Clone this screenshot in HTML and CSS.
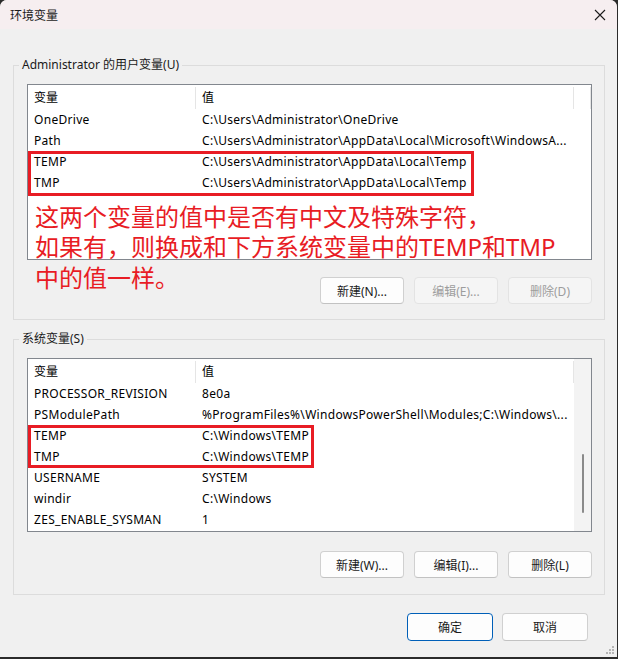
FILE: index.html
```html
<!DOCTYPE html>
<html lang="zh-CN">
<head>
    <meta charset="UTF-8">
    <title>环境变量</title>
    <link rel="stylesheet" href="styles.css">
</head>
<body>
    <div class="window">
        <div class="titlebar">
            <span class="title">环境变量</span>
            <svg class="close" width="12" height="12" viewBox="0 0 12 12">
                <path d="M1 1 L11 11 M11 1 L1 11" stroke="#1b1b1b" stroke-width="1.1" fill="none"/>
            </svg>
        </div>

        <div class="content">
            <fieldset class="group">
                <legend>Administrator 的用户变量(U)</legend>
                <div class="list list-user">
                    <div class="list-main">
                        <div class="row head"><span>变量</span><span>值</span><span></span></div>
                        <div class="row"><span>OneDrive</span><span>C:\Users\Administrator\OneDrive</span></div>
                        <div class="row"><span>Path</span><span>C:\Users\Administrator\AppData\Local\Microsoft\WindowsA...</span></div>
                        <div class="row"><span>TEMP</span><span>C:\Users\Administrator\AppData\Local\Temp</span></div>
                        <div class="row"><span>TMP</span><span>C:\Users\Administrator\AppData\Local\Temp</span></div>
                    </div>
                    <div class="mark mark-user"></div>
                    <p class="note">这两个变量的值中是否有中文及特殊字符，<br>如果有，则换成和下方系统变量中的<span class="latin">TEMP</span>和<span class="latin">TMP</span><br>中的值一样。</p>
                </div>
                <div class="buttons">
                    <button class="btn">新建(N)...</button>
                    <button class="btn" disabled>编辑(E)...</button>
                    <button class="btn" disabled>删除(D)</button>
                </div>
            </fieldset>

            <fieldset class="group group-sys">
                <legend>系统变量(S)</legend>
                <div class="list list-sys">
                    <div class="list-main">
                        <div class="row head"><span>变量</span><span>值</span><span></span></div>
                        <div class="row"><span>PROCESSOR_REVISION</span><span>8e0a</span></div>
                        <div class="row"><span>PSModulePath</span><span>%ProgramFiles%\WindowsPowerShell\Modules;C:\Windows\...</span></div>
                        <div class="row"><span>TEMP</span><span>C:\Windows\TEMP</span></div>
                        <div class="row"><span>TMP</span><span>C:\Windows\TEMP</span></div>
                        <div class="row"><span>USERNAME</span><span>SYSTEM</span></div>
                        <div class="row"><span>windir</span><span>C:\Windows</span></div>
                        <div class="row"><span>ZES_ENABLE_SYSMAN</span><span>1</span></div>
                    </div>
                    <div class="vscroll"><div class="thumb"></div></div>
                    <div class="mark mark-sys"></div>
                </div>
                <div class="buttons buttons-sys">
                    <button class="btn">新建(W)...</button>
                    <button class="btn">编辑(I)...</button>
                    <button class="btn">删除(L)</button>
                </div>
            </fieldset>

            <div class="footer">
                <button class="btn btn-main primary">确定</button>
                <button class="btn btn-main">取消</button>
            </div>
        </div>

        <svg class="grip" width="10" height="10" viewBox="0 0 10 10">
            <rect x="7" y="1" width="2" height="2" fill="#b5b5b5"/>
            <rect x="4" y="4" width="2" height="2" fill="#b5b5b5"/>
            <rect x="7" y="4" width="2" height="2" fill="#b5b5b5"/>
            <rect x="1" y="7" width="2" height="2" fill="#b5b5b5"/>
            <rect x="4" y="7" width="2" height="2" fill="#b5b5b5"/>
            <rect x="7" y="7" width="2" height="2" fill="#b5b5b5"/>
        </svg>
    </div>
</body>
</html>
```

FILE: styles.css
```css
body {
    margin: 0;
    background-color: #2b2b2b;
    font-family: "Noto Sans", "Noto Sans CJK SC", sans-serif;
    font-size: 12px;
    color: #1a1a1a;
}

.window {
    position: relative;
    width: 617px;
    height: 657px;
    background-color: #f0f0f0;
    border-radius: 7px 7px 0 0;
    overflow: hidden;
}

.titlebar {
    height: 29px;
    background-color: #f6eef0;
    display: flex;
    align-items: center;
    justify-content: space-between;
    padding: 0 11px 0 10px;
}

.title {
    font-family: "Noto Sans CJK SC", sans-serif;
    font-size: 12px;
}

.content {
    padding: 28px 12px 0 13px;
}

.group {
    margin: 0;
    padding: 11px 12px 15px 13px;
    border: 1px solid #dcdcdc;
    min-width: 0;
}

.group legend {
    padding: 0 3px;
    margin-left: -8px;
    line-height: 16px;
}

.group-sys {
    margin-top: 11px;
    padding-bottom: 16px;
}

.list {
    position: relative;
    display: flex;
    height: 176px;
    box-sizing: border-box;
    border: 1px solid #82878e;
    background-color: #fff;
}

.list-sys {
    height: 174px;
}

.list-main {
    flex: 1;
    min-width: 0;
}

.row {
    display: grid;
    grid-template-columns: 168px 378px 1fr;
    height: 21px;
    line-height: 22px;
    white-space: nowrap;
    letter-spacing: 0.3px;
    color: #000;
}

.row span {
    padding-left: 6px;
    overflow: hidden;
}

.row.head {
    height: 24px;
    line-height: 24px;
    letter-spacing: 0;
}

.row.head span {
    border-right: 1px solid #e5e5e5;
    margin: 2px 0 0;
    line-height: 22px;
}

.vscroll {
    position: relative;
    width: 17px;
    background-color: #f3f3f3;
}

.thumb {
    position: absolute;
    left: 8px;
    top: 95px;
    width: 2px;
    height: 59px;
    border-radius: 1px;
    background-color: #8a8a8a;
}

.mark {
    position: absolute;
    left: 0;
    top: 66px;
    border: 3px solid #e81c24;
}

.mark-user {
    width: 440px;
    height: 39px;
}

.mark-sys {
    width: 280px;
    height: 37px;
}

.note {
    position: absolute;
    left: 7px;
    top: 116px;
    margin: 0;
    font-family: "Noto Sans CJK SC", sans-serif;
    font-size: 24px;
    line-height: 30px;
    color: #e81c24;
    white-space: nowrap;
}

.note .latin {
    font-family: "Noto Sans", sans-serif;
}

.buttons {
    display: flex;
    justify-content: flex-end;
    gap: 10px;
    margin-top: 17px;
}

.buttons-sys {
    margin-top: 19px;
}

.btn {
    width: 84px;
    height: 27px;
    padding: 0;
    font-family: "Noto Sans", "Noto Sans CJK SC", sans-serif;
    font-size: 12px;
    color: #1a1a1a;
    background-color: #fdfdfd;
    border: 1px solid #d0d0d0;
    border-bottom-color: #c2c2c2;
    border-radius: 4px;
}

.btn:disabled {
    color: #9d9d9d;
    background-color: #f5f5f5;
    border-color: #e3e3e3;
}

.footer {
    display: flex;
    justify-content: flex-end;
    gap: 9px;
    margin-top: 18px;
    padding-right: 17px;
}

.btn-main {
    width: 86px;
    height: 28px;
}

.primary {
    border: 1px solid #005fb8;
}

.grip {
    position: absolute;
    right: 2px;
    bottom: 2px;
}
```
